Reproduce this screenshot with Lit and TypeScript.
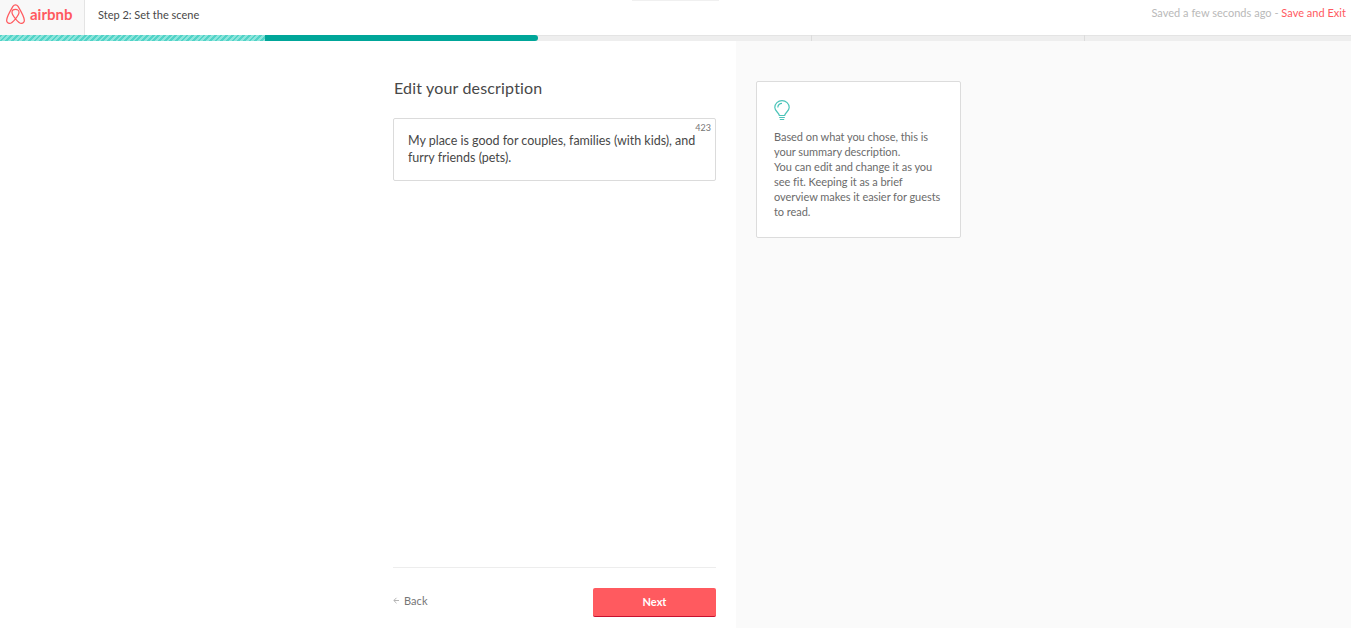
import { LitElement, css, html } from "lit";
import { customElement } from "lit/decorators.js";

@customElement("app-root")
export class AppRoot extends LitElement {
  static styles = css`
    :host {
      display: flex;
      flex-direction: column;
      height: 628px;
      overflow: hidden;
      background: #fff;
      font-family: "Lato", "Liberation Sans", sans-serif;
      color: #484848;
    }

    .header {
      display: flex;
      align-items: center;
      height: 35px;
      flex: none;
      position: relative;
    }

    .header__peek {
      position: absolute;
      left: 632px;
      top: 0;
      width: 87px;
      height: 1px;
      background: #f0f0f0;
    }

    .brand {
      display: flex;
      align-items: center;
      gap: 5px;
      box-sizing: border-box;
      width: 85px;
      height: 35px;
      padding: 0 0 7px 6px;
      background: #f8f8f8;
      border-right: 1px solid #e4e4e4;
      color: #ff5a5f;
    }

    .brand__name {
      font-size: 15px;
      font-weight: 700;
      line-height: 1;
    }

    .step {
      margin: 0 0 7px 13px;
      font-size: 11px;
      letter-spacing: 0;
    }

    .status {
      margin: 0 0 10px auto;
      padding-right: 5px;
      font-size: 11px;
      letter-spacing: 0.02px;
      color: #b9b9b9;
    }

    .status a {
      color: #ff5a5f;
      text-decoration: none;
    }

    .progress {
      display: flex;
      flex: none;
      height: 6px;
      background: #eeeeee;
      box-shadow: inset 0 1px #e4e4e4;
    }

    .progress__done {
      width: 265px;
      background: repeating-linear-gradient(
        -45deg,
        #8ce5dc 0 2px,
        #52d3c7 2px 4px
      );
    }

    .progress__current {
      width: 273px;
      margin-right: 1px;
      background: #00a699;
      border-radius: 0 3px 3px 0;
    }

    .progress__rest {
      width: 273px;
      border-right: 1px solid #dcdcdc;
      box-sizing: border-box;
    }

    .main {
      display: flex;
      flex: 1;
      min-height: 0;
    }

    .editor {
      display: flex;
      flex-direction: column;
      box-sizing: border-box;
      width: 736px;
      padding: 37px 20px 11px 393px;
    }

    h1 {
      margin: 0 0 0 1px;
      font-size: 16px;
      font-weight: 400;
      line-height: 20px;
      letter-spacing: 0.17px;
      color: #484848;
    }

    .field {
      position: relative;
      box-sizing: border-box;
      height: 63px;
      margin-top: 20px;
      padding: 13px 14px;
      border: 1px solid #dbdbdb;
      border-radius: 2px;
      font-size: 12.5px;
      line-height: 17px;
      letter-spacing: -0.02px;
    }

    .field__count {
      position: absolute;
      top: 3px;
      right: 4px;
      font-size: 9px;
      line-height: 11px;
      letter-spacing: 0;
      color: #767676;
    }

    .footer {
      display: flex;
      justify-content: space-between;
      margin-top: auto;
      padding-top: 20px;
      border-top: 1px solid #ededed;
    }

    .back {
      display: flex;
      align-items: center;
      gap: 5px;
      height: 25px;
      font-size: 11px;
      letter-spacing: 0.05px;
      color: #767676;
    }

    .next {
      box-sizing: border-box;
      width: 123px;
      height: 29px;
      padding: 0 0 2px;
      border: 0;
      border-bottom: 1px solid #c8102e;
      border-radius: 2px;
      background: #ff5a5f;
      color: #fff;
      font: 700 11px "Lato", "Liberation Sans", sans-serif;
    }

    .aside {
      flex: 1;
      padding: 40px 20px;
      background: #fafafa;
    }

    .tip {
      box-sizing: border-box;
      width: 205px;
      height: 157px;
      padding: 18px 17px 0;
      background: #fff;
      border: 1px solid #dcdcdc;
      border-radius: 2px;
      font-size: 11px;
      line-height: 15px;
      letter-spacing: -0.05px;
      color: #6b6b6b;
    }

    .tip svg {
      display: block;
      margin-bottom: 7px;
    }

    .tip p {
      margin: 0;
    }
  `;

  render() {
    return html`
      <header class="header">
        <div class="header__peek"></div>
        <div class="brand">
          <svg width="19" height="21" viewBox="0 0 20 22" fill="none" stroke="currentColor" stroke-width="1.3">
            <path d="M10 15.5C7.5 12.5 6.3 10.3 6.3 8.6 6.3 6.7 7.9 5.6 10 5.6s3.7 1.1 3.7 3c0 1.7-1.2 3.9-3.7 6.9Zm0 0c2.5 3 4.6 5 6.300 4.900 1.900-.1 3.100-1.600 3-3.400-.1-2.100-3.600-9.500-6.600-14.500C12 1.400 11.100.8 10 .8S8 1.400 7.300 2.500C4.300 7.500.8 14.900.7 17c-.1 1.800 1.100 3.300 3 3.400 1.700.1 3.800-1.900 6.300-4.900Z"/>
          </svg>
          <span class="brand__name">airbnb</span>
        </div>
        <div class="step">Step 2: Set the scene</div>
        <div class="status">Saved a few seconds ago - <a href="#">Save and Exit</a></div>
      </header>

      <div class="progress">
        <div class="progress__done"></div>
        <div class="progress__current"></div>
        <div class="progress__rest"></div>
        <div class="progress__rest"></div>
      </div>

      <main class="main">
        <section class="editor">
          <h1>Edit your description</h1>
          <div class="field">
            <span class="field__count">423</span>
            My place is good for couples, families (with kids), and furry friends (pets).
          </div>
          <div class="footer">
            <div class="back">
              <svg width="6" height="7" viewBox="0 0 6 7" fill="none" stroke="#b5b5b5" stroke-width="1">
                <path d="M3.500.8.800 3.500l2.700 2.700M1 3.500h5"/>
              </svg>
              <span>Back</span>
            </div>
            <button class="next">Next</button>
          </div>
        </section>

        <aside class="aside">
          <div class="tip">
            <svg width="16" height="22" viewBox="0 0 16 22" fill="none" stroke="#4cc4b9" stroke-width="1.200">
              <path d="M5.300 15.500C4.800 12.500.8 11 .8 7.500a7.200 6.900 0 0 1 14.400 0c0 3.500-4 5-4.500 8Z"/>
              <path d="M3.800 7.500A4.200 4.200 0 0 1 8 3.300M5.200 17.500h5.600M5.800 19.500h4.400"/>
            </svg>
            <p>Based on what you chose, this is your summary description.<br />You can edit and change it as you see fit. Keeping it as a brief overview makes it easier for guests to read.</p>
          </div>
        </aside>
      </main>
    `;
  }
}
